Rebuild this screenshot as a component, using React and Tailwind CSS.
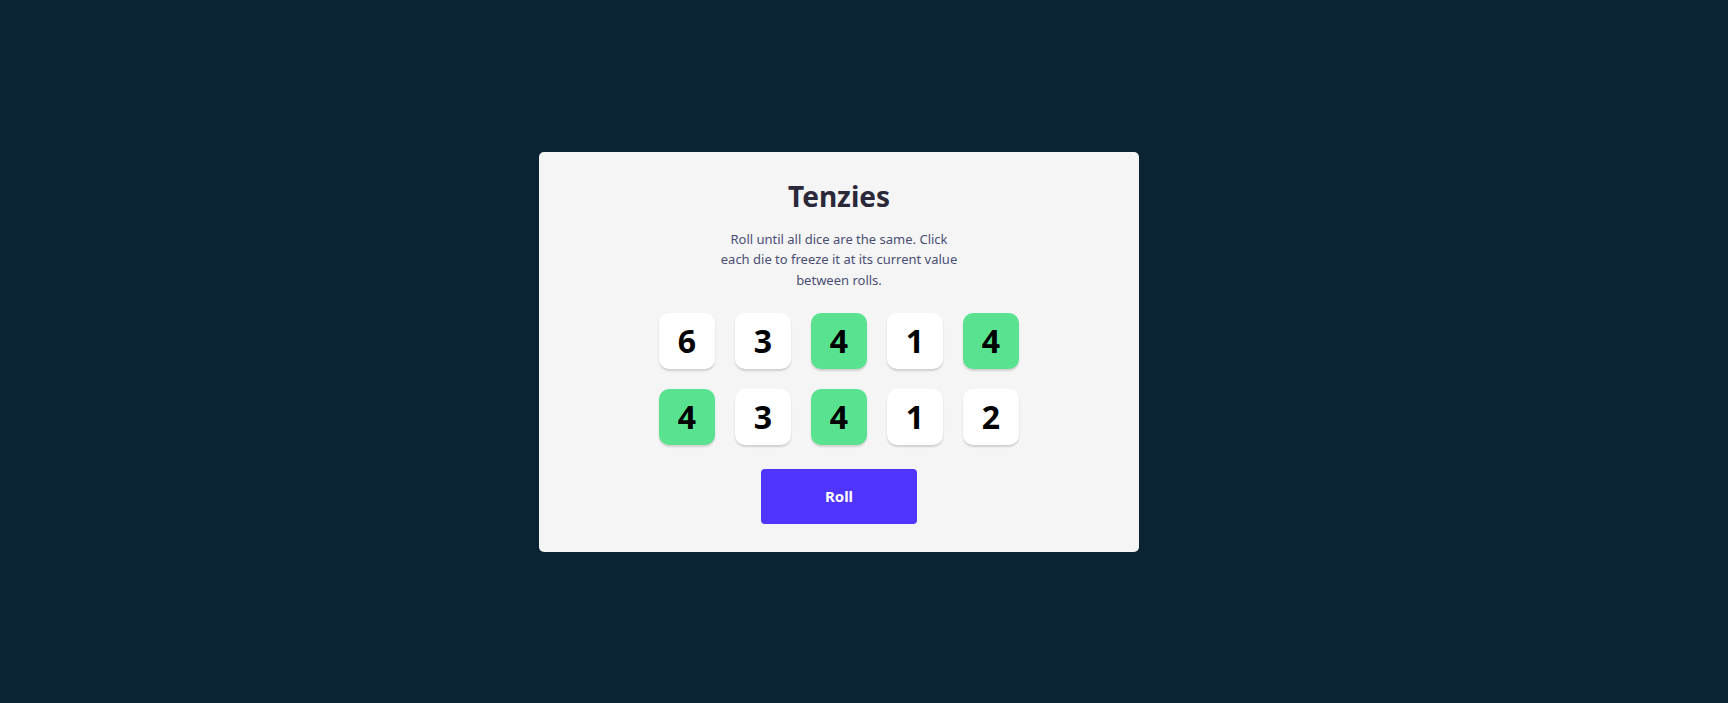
export default function App() {
  const dice = [
    { v: 6, held: false },
    { v: 3, held: false },
    { v: 4, held: true },
    { v: 1, held: false },
    { v: 4, held: true },
    { v: 4, held: true },
    { v: 3, held: false },
    { v: 4, held: true },
    { v: 1, held: false },
    { v: 2, held: false },
  ];
  return (
    <div
      className="w-full h-[703px] bg-[#0b2434] flex items-center justify-center pr-[50px]"
      style={{ fontFamily: '"Noto Sans", "Open Sans", sans-serif' }}
    >
      <main className="w-[600px] bg-[#f5f5f5] rounded-[5px] pt-[27px] pb-[28px] flex flex-col items-center">
        <h1 className="text-[28px] leading-[34px] font-bold text-[#2b283a]">Tenzies</h1>
        <p className="mt-[16px] text-[13px] leading-[20.5px] text-center text-[#4a4e74]">
          Roll until all dice are the same. Click
          <br />
          each die to freeze it at its current value
          <br />
          between rolls.
        </p>
        <div className="mt-[22.5px] grid grid-cols-5 gap-[20px]">
          {dice.map((d, i) => (
            <button
              key={i}
              className={`w-[56px] h-[56px] rounded-[10px] flex items-center justify-center text-[32px] font-bold text-black shadow-[0_2px_2px_rgba(0,0,0,0.15)] ${
                d.held ? "bg-[#59e391]" : "bg-white"
              }`}
            >
              {d.v}
            </button>
          ))}
        </div>
        <button className="mt-[24px] w-[156px] h-[55px] rounded-[4px] bg-[#5035ff] text-white font-bold text-[15px]">
          Roll
        </button>
      </main>
    </div>
  );
}
